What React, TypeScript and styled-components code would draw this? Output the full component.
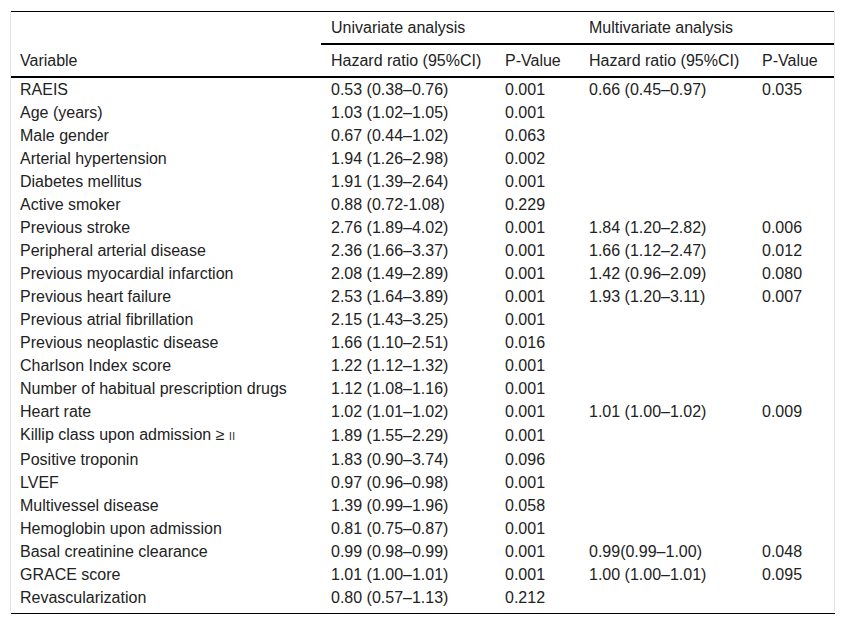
import React from 'react';
import styled, { createGlobalStyle } from 'styled-components';

const GlobalStyle = createGlobalStyle`
  body {
    margin: 0;
    background: #fff;
    font-family: "Liberation Sans", Arial, sans-serif;
    color: #222;
  }
`;

const Page = styled.div`
  padding: 11px 11px 0 10px;
`;

const Frame = styled.div`
  border-left: 1px solid #e4e4e4;
  border-right: 1px solid #e4e4e4;
  padding-bottom: 2px;
`;

const Table = styled.table`
  width: 100%;
  table-layout: fixed;
  border-collapse: separate;
  border-spacing: 0;
  border-top: 1px solid #000;
  font-size: 16px;
  line-height: 19px;
`;

const HeadCell = styled.th<{ $rule?: boolean; $first?: boolean }>`
  padding: 6px 10px 6px ${(p) => (p.$first ? '9px' : '10px')};
  text-align: left;
  font-weight: normal;
  vertical-align: bottom;
  white-space: nowrap;
  border-bottom: ${(p) => (p.$rule ? '2px solid #000' : 'none')};
`;

const Cell = styled.td<{ $first?: boolean }>`
  padding: 2px 10px 2px ${(p) => (p.$first ? '9px' : '10px')};
  white-space: nowrap;
  vertical-align: middle;
`;

const Roman = styled.span`
  font-size: 10px;
  letter-spacing: 0.5px;
`;

const BottomRule = styled.div`
  margin: 2px 0 0 1px;
  border-top: 1px solid #000;
`;

type Row = {
  name: React.ReactNode;
  hr: string;
  p: string;
  mhr?: string;
  mp?: string;
};

const rows: Row[] = [
  { name: 'RAEIS', hr: '0.53 (0.38–0.76)', p: '0.001', mhr: '0.66 (0.45–0.97)', mp: '0.035' },
  { name: 'Age (years)', hr: '1.03 (1.02–1.05)', p: '0.001' },
  { name: 'Male gender', hr: '0.67 (0.44–1.02)', p: '0.063' },
  { name: 'Arterial hypertension', hr: '1.94 (1.26–2.98)', p: '0.002' },
  { name: 'Diabetes mellitus', hr: '1.91 (1.39–2.64)', p: '0.001' },
  { name: 'Active smoker', hr: '0.88 (0.72-1.08)', p: '0.229' },
  { name: 'Previous stroke', hr: '2.76 (1.89–4.02)', p: '0.001', mhr: '1.84 (1.20–2.82)', mp: '0.006' },
  { name: 'Peripheral arterial disease', hr: '2.36 (1.66–3.37)', p: '0.001', mhr: '1.66 (1.12–2.47)', mp: '0.012' },
  { name: 'Previous myocardial infarction', hr: '2.08 (1.49–2.89)', p: '0.001', mhr: '1.42 (0.96–2.09)', mp: '0.080' },
  { name: 'Previous heart failure', hr: '2.53 (1.64–3.89)', p: '0.001', mhr: '1.93 (1.20–3.11)', mp: '0.007' },
  { name: 'Previous atrial fibrillation', hr: '2.15 (1.43–3.25)', p: '0.001' },
  { name: 'Previous neoplastic disease', hr: '1.66 (1.10–2.51)', p: '0.016' },
  { name: 'Charlson Index score', hr: '1.22 (1.12–1.32)', p: '0.001' },
  { name: 'Number of habitual prescription drugs', hr: '1.12 (1.08–1.16)', p: '0.001' },
  { name: 'Heart rate', hr: '1.02 (1.01–1.02)', p: '0.001', mhr: '1.01 (1.00–1.02)', mp: '0.009' },
  {
    name: (
      <>
        Killip class upon admission ≥ <Roman>II</Roman>
      </>
    ),
    hr: '1.89 (1.55–2.29)',
    p: '0.001',
  },
  { name: 'Positive troponin', hr: '1.83 (0.90–3.74)', p: '0.096' },
  { name: 'LVEF', hr: '0.97 (0.96–0.98)', p: '0.001' },
  { name: 'Multivessel disease', hr: '1.39 (0.99–1.96)', p: '0.058' },
  { name: 'Hemoglobin upon admission', hr: '0.81 (0.75–0.87)', p: '0.001' },
  { name: 'Basal creatinine clearance', hr: '0.99 (0.98–0.99)', p: '0.001', mhr: '0.99(0.99–1.00)', mp: '0.048' },
  { name: 'GRACE score', hr: '1.01 (1.00–1.01)', p: '0.001', mhr: '1.00 (1.00–1.01)', mp: '0.095' },
  { name: 'Revascularization', hr: '0.80 (0.57–1.13)', p: '0.212' },
];

const App = () => (
  <>
    <GlobalStyle />
    <Page>
      <Frame>
        <Table>
          <colgroup>
            <col style={{ width: 310 }} />
            <col style={{ width: 174 }} />
            <col style={{ width: 84 }} />
            <col style={{ width: 173 }} />
            <col style={{ width: 82 }} />
          </colgroup>
          <thead>
            <tr>
              <HeadCell $first $rule rowSpan={2}>
                Variable
              </HeadCell>
              <HeadCell $rule colSpan={2}>
                Univariate analysis
              </HeadCell>
              <HeadCell $rule colSpan={2}>
                Multivariate analysis
              </HeadCell>
            </tr>
            <tr>
              <HeadCell $rule>Hazard ratio (95%CI)</HeadCell>
              <HeadCell $rule>P-Value</HeadCell>
              <HeadCell $rule>Hazard ratio (95%CI)</HeadCell>
              <HeadCell $rule>P-Value</HeadCell>
            </tr>
          </thead>
          <tbody>
            {rows.map((r, i) => (
              <tr key={i}>
                <Cell $first>{r.name}</Cell>
                <Cell>{r.hr}</Cell>
                <Cell>{r.p}</Cell>
                <Cell>{r.mhr ?? ''}</Cell>
                <Cell>{r.mp ?? ''}</Cell>
              </tr>
            ))}
          </tbody>
        </Table>
      </Frame>
      <BottomRule />
    </Page>
  </>
);

export default App;
